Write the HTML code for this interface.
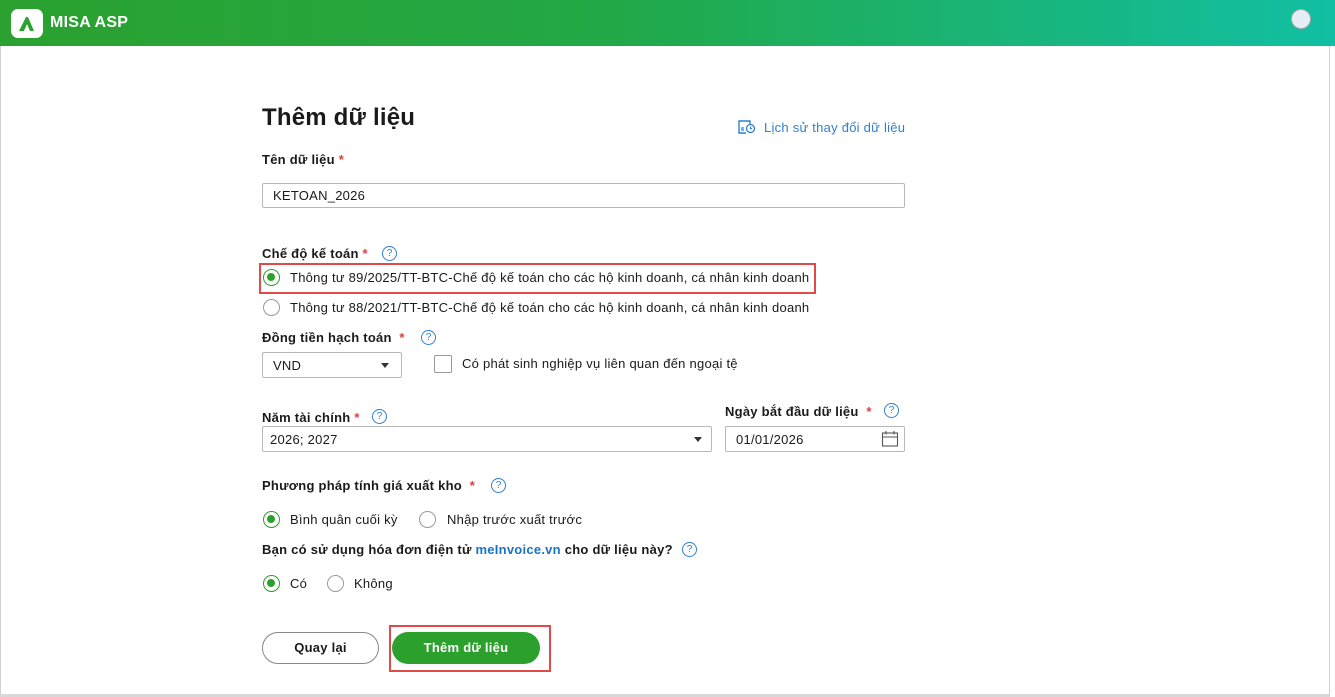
<!DOCTYPE html>
<html><head><meta charset="utf-8"><style>
*{margin:0;padding:0;box-sizing:border-box}
body{width:1335px;height:697px;overflow:hidden;background:#fff;font-family:"Liberation Sans",sans-serif;color:#1a1a1a;font-size:13px;position:relative;letter-spacing:0.25px}
.a{position:absolute;white-space:nowrap}
.hdr{left:0;top:0;width:1335px;height:46px;background:linear-gradient(90deg,#2ba12f 0%,#22a846 45%,#12bfa3 100%)}
.lbl{font-weight:bold;font-size:13px}
.req{color:#e53935}
.help{width:15px;height:15px;border:1.3px solid #2f7fd0;border-radius:50%;color:#2f7fd0;font-size:10px;text-align:center;line-height:13px;letter-spacing:0}
.inp{border:1px solid #b8b8b8;border-radius:2px;background:#fff;padding-left:10px;font-size:13px;display:flex;align-items:center}
.rad{width:17px;height:17px;border:1px solid #9a9a9a;border-radius:50%;background:#fff}
.rad.on{border:1.5px solid #2ca02c}
.rad.on::after{content:"";position:absolute;left:3px;top:3px;width:8px;height:8px;border-radius:50%;background:#2ca02c}
.caret{width:0;height:0;border-left:4px solid transparent;border-right:4px solid transparent;border-top:5px solid #333}
</style></head><body>
<div class="a hdr"></div>
<div class="a" style="left:11px;top:9px;width:32px;height:29px;background:#fff;border-radius:7px"></div>
<svg class="a" style="left:17px;top:14px" width="20" height="19" viewBox="0 0 20 19"><path d="M2 17 L9 3 L11 3 L17 17 L13 17 L10 10 L7 17 Z" fill="#2ba12f"/><path d="M7 17 L10 12 L12 17Z" fill="#fff"/></svg>
<div class="a" style="left:50px;top:14px;color:#fff;font-weight:bold;font-size:16px">MISA ASP</div>
<div class="a" style="left:1291px;top:9px;width:20px;height:20px;border-radius:50%;background:#e6eef5;border:1px solid #aaa"></div>
<div class="a" style="left:1329px;top:46px;width:1px;height:651px;background:#d0d0d0"></div>
<div class="a" style="left:0;top:46px;width:1px;height:651px;background:#d0d0d0"></div>
<div class="a" style="left:0;top:694px;width:1330px;height:3px;background:#d8d8d8"></div>

<div class="a" style="left:262px;top:104px;font-size:24px;font-weight:bold;letter-spacing:0.2px">Thêm dữ liệu</div>
<svg class="a" style="left:738px;top:119px" width="18" height="16" viewBox="0 0 18 16"><path d="M8 14H1V2H12V5" fill="none" stroke="#2f7fd0" stroke-width="1.4"/><path d="M3 9H6M3 11H6" stroke="#2f7fd0" stroke-width="1.2"/><circle cx="12.5" cy="9.5" r="4" fill="none" stroke="#2f7fd0" stroke-width="1.3"/><path d="M12.5 7.5V9.7H14" fill="none" stroke="#2f7fd0" stroke-width="1.1"/></svg>
<div class="a" style="left:764px;top:120px;color:#2f7fd0;font-size:13px">Lịch sử thay đổi dữ liệu</div>

<div class="a lbl" style="left:262px;top:152px">Tên dữ liệu <span class="req">*</span></div>
<div class="a inp" style="left:262px;top:183px;width:643px;height:25px">KETOAN_2026</div>

<div class="a lbl" style="left:262px;top:246px">Chế độ kế toán <span class="req">*</span></div>
<div class="a help" style="left:382px;top:246px">?</div>
<div class="a" style="left:259px;top:263px;width:557px;height:31px;border:2px solid #e24a4a"></div>
<div class="a rad on" style="left:263px;top:269px"></div>
<div class="a" style="left:290px;top:270px">Thông tư 89/2025/TT-BTC-Chế độ kế toán cho các hộ kinh doanh, cá nhân kinh doanh</div>
<div class="a rad" style="left:263px;top:299px"></div>
<div class="a" style="left:290px;top:300px">Thông tư 88/2021/TT-BTC-Chế độ kế toán cho các hộ kinh doanh, cá nhân kinh doanh</div>

<div class="a lbl" style="left:262px;top:330px">Đồng tiền hạch toán &nbsp;<span class="req">*</span></div>
<div class="a help" style="left:421px;top:330px">?</div>
<div class="a inp" style="left:262px;top:352px;width:140px;height:26px">VND</div>
<div class="a caret" style="left:381px;top:363px"></div>
<div class="a" style="left:434px;top:355px;width:18px;height:18px;border:1px solid #9a9a9a;border-radius:2px"></div>
<div class="a" style="left:462px;top:356px">Có phát sinh nghiệp vụ liên quan đến ngoại tệ</div>

<div class="a lbl" style="left:262px;top:410px">Năm tài chính <span class="req">*</span></div>
<div class="a help" style="left:372px;top:409px">?</div>
<div class="a inp" style="left:262px;top:426px;width:450px;height:26px;padding-left:7px">2026; 2027</div>
<div class="a caret" style="left:694px;top:437px"></div>
<div class="a lbl" style="left:725px;top:404px">Ngày bắt đầu dữ liệu &nbsp;<span class="req">*</span></div>
<div class="a help" style="left:884px;top:403px">?</div>
<div class="a inp" style="left:725px;top:426px;width:180px;height:26px">01/01/2026</div>
<svg class="a" style="left:881px;top:430px" width="18" height="17" viewBox="0 0 18 17"><rect x="1.5" y="3" width="15" height="13" fill="none" stroke="#555" stroke-width="1.1"/><path d="M1.5 7H16.5M5 1V4.5M13 1V4.5" stroke="#555" stroke-width="1.1"/></svg>

<div class="a lbl" style="left:262px;top:478px">Phương pháp tính giá xuất kho &nbsp;<span class="req">*</span></div>
<div class="a help" style="left:491px;top:478px">?</div>
<div class="a rad on" style="left:263px;top:511px"></div>
<div class="a" style="left:290px;top:512px">Bình quân cuối kỳ</div>
<div class="a rad" style="left:419px;top:511px"></div>
<div class="a" style="left:447px;top:512px">Nhập trước xuất trước</div>

<div class="a lbl" style="left:262px;top:542px">Bạn có sử dụng hóa đơn điện tử <span style="color:#1a73c8">meInvoice.vn</span> cho dữ liệu này?</div>
<div class="a help" style="left:682px;top:542px">?</div>
<div class="a rad on" style="left:263px;top:575px"></div>
<div class="a" style="left:290px;top:576px">Có</div>
<div class="a rad" style="left:327px;top:575px"></div>
<div class="a" style="left:354px;top:576px">Không</div>

<div class="a" style="left:262px;top:632px;width:117px;height:32px;border:1px solid #888;border-radius:16px;text-align:center;line-height:30px;font-weight:bold">Quay lại</div>
<div class="a" style="left:389px;top:625px;width:162px;height:47px;border:2px solid #e24a4a"></div>
<div class="a" style="left:392px;top:632px;width:148px;height:32px;background:#2ca02c;border-radius:16px;text-align:center;line-height:32px;font-weight:bold;color:#fff">Thêm dữ liệu</div>
</body></html>
